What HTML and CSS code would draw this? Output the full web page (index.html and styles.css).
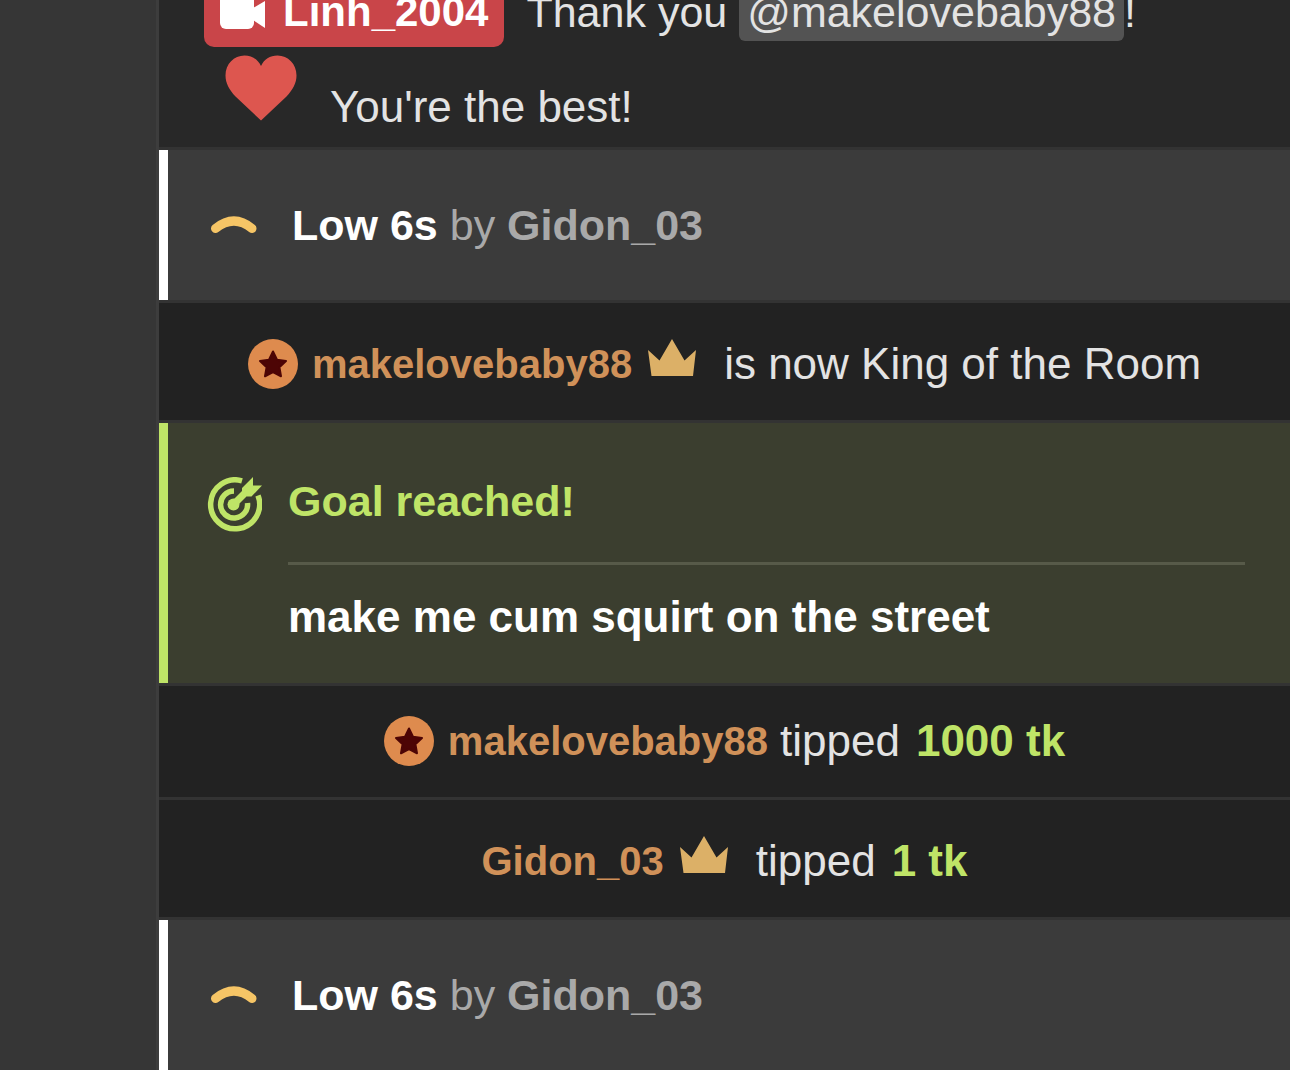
FILE: index.html
```html
<!DOCTYPE html>
<html lang="en">
<head>
	<meta charset="UTF-8">
	<title>Chat</title>
	<link rel="stylesheet" href="styles.css">
</head>
<body>

<svg class="defs" width="0" height="0">
	<symbol id="star" viewBox="0 0 50 50">
		<circle cx="25" cy="25" r="25" fill="#de8b4e"/>
		<path d="M25 12.500l4 8.300 9 1.200-6.600 6.300 1.600 9-8-4.300-8 4.300 1.600-9L12 22l9-1.200z" fill="#4d0505" stroke="#4d0505" stroke-width="2" stroke-linejoin="round"/>
	</symbol>
	<symbol id="crown" viewBox="0 0 48 37">
		<path d="M0 11l11.500 10.500L24 0l12.500 21.500L48 11l-3 26H3.500z" fill="#dcb067"/>
	</symbol>
	<symbol id="low" viewBox="0 0 56 20">
		<path d="M9.500 13.500Q28-1.500 46 13.500" fill="none" stroke="#f6c566" stroke-width="9" stroke-linecap="round"/>
	</symbol>
</svg>

<div class="page">
	<div class="side"></div>
	<div class="chat">
		<div class="msg">
			<div class="line">
				<span class="badge">
					<svg width="45" height="34" viewBox="0 0 45 34"><rect width="34" height="34" rx="6" fill="#fff"/><path d="M33 13L45 6v27l-12-8z" fill="#fff"/></svg>
					<b>Linh_2004</b>
				</span>
				<span class="text">Thank you</span>
				<span class="mention">@makelovebaby88</span>
				<span>!</span>
			</div>
			<div class="line second">
				<svg class="heart" width="72" height="66" viewBox="0 0 72 66"><path d="M36 65.500L10.500 41.500C4 34.500 .5 28 .5 20.500 .5 9 9 .5 19.500.5 27 .5 33 4.500 36 11 39 4.500 45 .5 52.500.5 63 .5 71.500 9 71.500 20.500c0 7.500-3.500 14-10 21z" fill="#dd564f"/></svg>
				<span>You're the best!</span>
			</div>
		</div>

		<div class="notice">
			<svg width="56" height="20"><use href="#low"/></svg>
			<p><b>Low 6s</b> by <b class="who">Gidon_03</b></p>
		</div>

		<div class="tip tall">
			<svg class="star" width="50" height="50"><use href="#star"/></svg>
			<b class="name">makelovebaby88</b>
			<svg class="crown" width="48" height="37"><use href="#crown"/></svg>
			<span>is now King of the Room</span>
		</div>

		<div class="goal">
			<svg width="56" height="56" viewBox="0 0 56 56" fill="none" stroke="#bfe467" stroke-width="5.500">
				<path d="M36 3.800A24.500 24.500 0 1 0 52 18.500"/>
				<path d="M28 14A13.500 13.500 0 1 0 41.500 26"/>
				<path d="M28 27L42 13" stroke-width="7"/>
				<circle cx="27.500" cy="27.500" r="6" fill="#bfe467" stroke="none"/>
				<path d="M36 11L47 0V8.500H56L45.500 19.500H41L36 16z" fill="#bfe467" stroke="none"/>
			</svg>
			<div class="goal_text">
				<h2>Goal reached!</h2>
				<p>make me cum squirt on the street</p>
			</div>
		</div>

		<div class="tip">
			<svg class="star" width="50" height="50"><use href="#star"/></svg>
			<b class="name">makelovebaby88</b>
			<span>tipped</span>
			<b class="tk">1000 tk</b>
		</div>

		<div class="tip tall">
			<b class="name">Gidon_03</b>
			<svg class="crown" width="48" height="37"><use href="#crown"/></svg>
			<span>tipped</span>
			<b class="tk">1 tk</b>
		</div>

		<div class="notice">
			<svg width="56" height="20"><use href="#low"/></svg>
			<p><b>Low 6s</b> by <b class="who">Gidon_03</b></p>
		</div>
	</div>
</div>

</body>
</html>
```
FILE: styles.css
```css
body, p, h2 {
	margin: 0;
	padding: 0;
}
body {
	background-color: #363636;
	color: #e3e3e3;
	font-family: "Liberation Sans", Arial, Helvetica, sans-serif;
	font-size: 44px;
	line-height: 48px;
}
svg {
	display: block;
	flex-shrink: 0;
}
.defs {
	position: absolute;
}
.page {
	display: flex;
	height: 100vh;
	overflow: hidden;
}
.side {
	width: 156px;
	flex-shrink: 0;
	border-right: 3px solid #3d3d3d;
}
/* the chat sticks to its last message */
.chat {
	flex: 1;
	min-width: 0;
	display: flex;
	flex-direction: column;
	justify-content: flex-end;
	gap: 3px;
	background-color: #333;
	white-space: nowrap;
}
.chat > div {
	flex-shrink: 0;
}
.msg {
	background-color: #282828;
	padding: 16px 45px;
}
.line {
	display: flex;
	align-items: center;
	font-size: 43px;
}
.badge {
	display: flex;
	align-items: center;
	gap: 18px;
	padding: 0 16px;
	border-radius: 10px;
	background-color: #c94549;
	color: #fff;
	font-size: 42px;
	line-height: 70px;
}
.text {
	margin: 0 12px 0 22px;
}
.mention {
	padding: 5px 8px;
	border-radius: 6px;
	background-color: #535353;
}
.second {
	align-items: flex-end;
	padding-top: 8px;
	font-size: 44px;
}
.heart {
	margin: 0 33px 10px 21px;
}
.notice {
	display: flex;
	align-items: center;
	gap: 30px;
	padding: 51px 38px;
	border-left: 9px solid #fff;
	background-color: #3b3b3b;
	color: #a9a9a9;
	font-size: 43px;
}
.notice b {
	color: #fff;
}
.notice .who {
	color: #a9a9a9;
}
.tip {
	display: flex;
	align-items: center;
	justify-content: center;
	box-sizing: border-box;
	min-height: 111px;
	padding-bottom: 2px;
	background-color: #222;
}
.tall {
	min-height: 117px;
	padding: 4px 0 0;
}
.star {
	margin-right: 14px;
}
.name {
	margin-right: 12px;
	color: #d09159;
	font-size: 40px;
}
.crown {
	margin: 0 28px 12px 4px;
}
.tk {
	margin-left: 16px;
	color: #bfe467;
}
.goal {
	display: flex;
	align-items: flex-start;
	gap: 26px;
	padding: 54px 45px 42px 38px;
	border-left: 9px solid #bfe467;
	background-color: #3b3e2f;
}
.goal_text {
	flex: 1;
}
.goal h2 {
	padding-bottom: 37px;
	border-bottom: 3px solid #575a49;
	color: #bfe467;
	font-size: 43px;
}
.goal p {
	padding-top: 28px;
	color: #fff;
	font-weight: bold;
}
```
